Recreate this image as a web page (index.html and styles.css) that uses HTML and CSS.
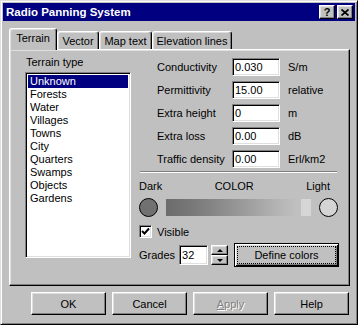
FILE: index.html
```html
<!DOCTYPE html>
<html>
<head>
<meta charset="utf-8">
<title>Radio Panning System</title>
<link rel="stylesheet" href="styles.css">
</head>
<body>
<div class="window">
<div class="titleBar">
<span class="titleText">Radio Panning System</span>
<div class="titleButtons">
<span class="titleButton helpGlyph">?</span>
<span class="titleButton"><svg width="8" height="7" viewBox="0 0 8 7"><path d="M0.5 0.5 L7.5 6.5 M7.5 0.5 L0.5 6.5" stroke="#000" stroke-width="1.7" fill="none"/></svg></span>
</div>
</div>

<div class="dialogBody">
<div class="tabRow">
<div class="tab tabActive tabTerrain">Terrain</div>
<div class="tab tabVector">Vector</div>
<div class="tab tabMap">Map text</div>
<div class="tab tabElevation">Elevation lines</div>
</div>

<div class="tabPanel">
<div class="terrainColumn">
<div class="groupLabel">Terrain type</div>
<ul class="listBox">
<li class="selected">Unknown</li>
<li>Forests</li>
<li>Water</li>
<li>Villages</li>
<li>Towns</li>
<li>City</li>
<li>Quarters</li>
<li>Swamps</li>
<li>Objects</li>
<li>Gardens</li>
</ul>
</div>

<div class="propertyColumn">
<div class="propertyRow">
<span class="propertyLabel">Conductivity</span>
<input class="textField" type="text" value="0.030">
<span class="propertyUnit">S/m</span>
</div>
<div class="propertyRow">
<span class="propertyLabel">Permittivity</span>
<input class="textField" type="text" value="15.00">
<span class="propertyUnit">relative</span>
</div>
<div class="propertyRow">
<span class="propertyLabel">Extra height</span>
<input class="textField" type="text" value="0">
<span class="propertyUnit">m</span>
</div>
<div class="propertyRow">
<span class="propertyLabel">Extra loss</span>
<input class="textField" type="text" value="0.00">
<span class="propertyUnit">dB</span>
</div>
<div class="propertyRow">
<span class="propertyLabel">Traffic density</span>
<input class="textField" type="text" value="0.00">
<span class="propertyUnit">Erl/km2</span>
</div>

<div class="separator"></div>

<div class="colorHead">
<span>Dark</span>
<span>COLOR</span>
<span>Light</span>
</div>
<div class="colorRow">
<span class="swatch swatchDark"></span>
<span class="colorBar"></span>
<span class="swatch swatchLight"></span>
</div>

<div class="checkRow">
<span class="checkBox"><svg width="9" height="9" viewBox="0 0 9 9"><path d="M1 4 L3.5 6.5 L8 1.5" stroke="#000" stroke-width="2" fill="none"/></svg></span>
<span>Visible</span>
</div>

<div class="gradesRow">
<span>Grades</span>
<input class="textField gradesField" type="text" value="32">
<div class="spinner">
<span class="spinButton"><span class="arrowUp"></span></span>
<span class="spinButton"><span class="arrowDown"></span></span>
</div>
<button class="pushButton defaultButton"><span class="focusRect">Define colors</span></button>
</div>
</div>
</div>

<div class="dialogButtons">
<button class="pushButton dialogButton">OK</button>
<button class="pushButton dialogButton">Cancel</button>
<button class="pushButton dialogButton disabled"><u>A</u>pply</button>
<button class="pushButton dialogButton">Help</button>
</div>
</div>
</div>
</body>
</html>
```

FILE: styles.css
```css
body {
margin: 0;
background: #c0c0c0;
font-family: "Liberation Sans", Arial, sans-serif;
font-size: 11px;
color: #000;
}

.window {
width: 358px;
height: 325px;
box-sizing: border-box;
background: #c0c0c0;
border: 1px solid;
border-color: #dfdfdf #000 #000 #dfdfdf;
box-shadow: inset 1px 1px #fff, inset -1px -1px #808080;
padding: 2px;
display: flex;
flex-direction: column;
}

/* title bar */
.titleBar {
height: 18px;
flex: none;
background: #000080;
display: flex;
align-items: center;
justify-content: space-between;
padding: 0 2px 0 3px;
}

.titleText {
color: #fff;
font-weight: bold;
font-size: 11.5px;
}

.titleButtons {
display: flex;
gap: 2px;
}

.titleButton {
width: 16px;
height: 14px;
box-sizing: border-box;
background: #c0c0c0;
border: 1px solid;
border-color: #fff #000 #000 #fff;
box-shadow: inset -1px -1px #808080, inset 1px 1px #dfdfdf;
display: flex;
align-items: center;
justify-content: center;
}

.helpGlyph {
font-weight: bold;
font-size: 11px;
line-height: 12px;
}

/* tabs */
.dialogBody {
flex: 1;
display: flex;
flex-direction: column;
padding: 7px 5px 0 6px;
}

.tabRow {
display: flex;
align-items: flex-end;
height: 21px;
}

.tab {
height: 18px;
box-sizing: border-box;
border: 1px solid;
border-color: #fff #000 transparent #fff;
border-bottom: none;
border-radius: 3px 3px 0 0;
box-shadow: inset -1px 0 #808080, inset 1px 1px #dfdfdf;
background: #c0c0c0;
display: flex;
align-items: center;
justify-content: center;
}

.tabActive {
height: 22px;
margin-bottom: -1px;
position: relative;
z-index: 1;
padding-bottom: 3px;
}

.tabTerrain { width: 48px; }
.tabVector { width: 42px; }
.tabMap { width: 53px; }
.tabElevation { width: 80px; }

.tabPanel {
height: 237px;
box-sizing: border-box;
border: 1px solid;
border-color: #fff #000 #000 #fff;
box-shadow: inset -1px -1px #808080, inset 1px 1px #dfdfdf;
display: flex;
padding: 6px 0 0 15px;
}

/* terrain list */
.terrainColumn {
width: 106px;
display: flex;
flex-direction: column;
}

.groupLabel {
line-height: 13px;
padding-left: 1px;
margin-bottom: 3px;
}

.listBox {
height: 186px;
box-sizing: border-box;
margin: 0;
padding: 0;
list-style: none;
background: #fff;
border: 1px solid;
border-color: #808080 #fff #fff #808080;
box-shadow: inset 1px 1px #000, inset -1px -1px #dfdfdf;
padding: 2px 2px 0 2px;
}

.listBox li {
line-height: 13px;
height: 13px;
padding-left: 2px;
}

.listBox li.selected {
background: #000080;
color: #fff;
}

/* properties */
.propertyColumn {
width: 200px;
margin-left: 8px;
padding-top: 2px;
}

.propertyRow {
display: flex;
align-items: center;
height: 18px;
margin-bottom: 5px;
padding-left: 18px;
}

.propertyLabel {
width: 75px;
}

.textField {
width: 48px;
height: 18px;
box-sizing: border-box;
margin: 0;
padding: 0 2px;
font: inherit;
color: #000;
background: #fff;
border: 1px solid;
border-color: #808080 #fff #fff #808080;
box-shadow: inset 1px 1px #000, inset -1px -1px #dfdfdf;
outline: none;
}

.propertyUnit {
margin-left: 8px;
}

.separator {
height: 2px;
margin: -2px 2px 0 1px;
border-top: 1px solid #808080;
border-bottom: 1px solid #fff;
box-sizing: border-box;
}

/* colour range */
.colorHead {
display: flex;
justify-content: space-between;
line-height: 13px;
margin-top: 7px;
padding-right: 9px;
}

.colorRow {
display: flex;
align-items: center;
gap: 8px;
height: 19px;
margin-top: 5px;
}

.swatch {
width: 19px;
height: 19px;
box-sizing: border-box;
border: 1px solid #000;
border-radius: 50%;
}

.swatchDark { background: #717171; }
.swatchLight { background: #d4d4d4; }

.colorBar {
width: 145px;
height: 17px;
background: linear-gradient(to right, #6c6c6c 0%, #767676 15%, #838383 30%, #929292 45%, #a2a2a2 60%, #b2b2b2 75%, #bebebe 88%, #c0c0c0 90%, #c0c0c0 93%, #d6d6d6 93%, #d6d6d6 100%);
}

.checkRow {
display: flex;
align-items: center;
gap: 5px;
height: 13px;
margin-top: 8px;
}

.checkBox {
width: 13px;
height: 13px;
box-sizing: border-box;
background: #fff;
border: 1px solid;
border-color: #808080 #fff #fff #808080;
box-shadow: inset 1px 1px #000, inset -1px -1px #dfdfdf;
display: flex;
align-items: center;
justify-content: center;
}

.gradesRow {
display: flex;
align-items: center;
height: 24px;
margin-top: 5px;
}

.gradesField {
width: 29px;
height: 20px;
margin-left: 4px;
}

.spinner {
display: flex;
flex-direction: column;
margin-left: 3px;
width: 17px;
height: 20px;
}

.spinButton {
height: 10px;
box-sizing: border-box;
background: #c0c0c0;
border: 1px solid;
border-color: #fff #000 #000 #fff;
box-shadow: inset -1px -1px #808080, inset 1px 1px #dfdfdf;
display: flex;
align-items: center;
justify-content: center;
}

.arrowUp {
width: 0;
height: 0;
border-left: 3px solid transparent;
border-right: 3px solid transparent;
border-bottom: 3px solid #000;
}

.arrowDown {
width: 0;
height: 0;
border-left: 3px solid transparent;
border-right: 3px solid transparent;
border-top: 3px solid #000;
}

/* buttons */
.pushButton {
box-sizing: border-box;
margin: 0;
font: inherit;
color: #000;
background: #c0c0c0;
border: 1px solid;
border-color: #fff #000 #000 #fff;
box-shadow: inset -1px -1px #808080, inset 1px 1px #dfdfdf;
padding: 0;
}

.defaultButton {
width: 105px;
height: 24px;
margin-left: 6px;
border-color: #000;
box-shadow: inset 1px 1px #fff, inset -1px -1px #000, inset 2px 2px #dfdfdf, inset -2px -2px #808080;
padding: 2px;
display: flex;
}

.focusRect {
flex: 1;
border: 1px dotted #000;
display: flex;
align-items: center;
justify-content: center;
}

.dialogButtons {
display: flex;
justify-content: flex-end;
gap: 6px;
margin-top: 6px;
padding-right: 1px;
}

.dialogButton {
width: 75px;
height: 23px;
}

.disabled {
color: #808080;
text-shadow: 1px 1px #fff;
}
```
